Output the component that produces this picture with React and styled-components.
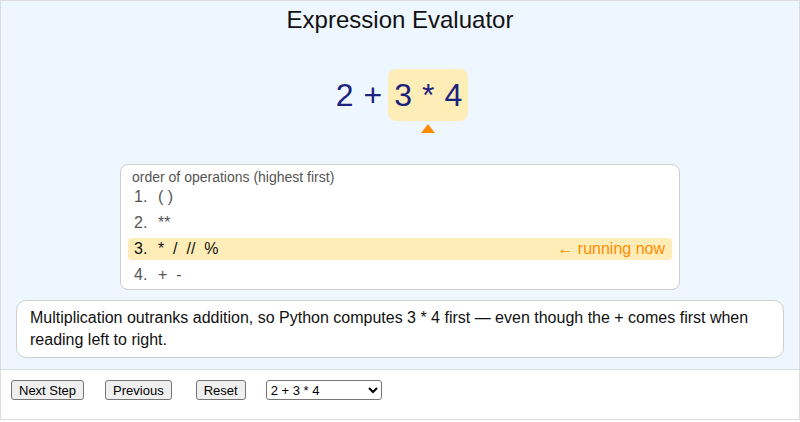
import React, { useState } from 'react'
import styled, { createGlobalStyle } from 'styled-components'

const GlobalStyle = createGlobalStyle`
  html, body {
    margin: 0;
    padding: 0;
    background: #ffffff;
  }
  body {
    font-family: "Liberation Sans", Arial, Helvetica, sans-serif;
  }
`

const Frame = styled.div`
  width: 800px;
  height: 420px;
  box-sizing: border-box;
  border: 1px solid #dcdcdc;
  display: flex;
  flex-direction: column;
`

const Stage = styled.div`
  background: #eef6ff;
  border-bottom: 1px solid #dcdcdc;
  padding: 5px 15px 11px;
  display: flex;
  flex-direction: column;
  align-items: center;
`

const Title = styled.h2`
  margin: 0;
  font-size: 24px;
  font-weight: normal;
  line-height: 28px;
  color: #111;
`

const Expression = styled.div`
  margin-top: 35px;
  display: flex;
  align-items: flex-start;
  gap: 2px;
  font-size: 32px;
  line-height: 38px;
  color: #1a237e;
`

const Token = styled.span`
  padding: 7px 4px;
`

const Focus = styled.div`
  display: flex;
  flex-direction: column;
  align-items: center;
`

const FocusBox = styled.div`
  display: flex;
  gap: 2px;
  background: #ffedb8;
  border-radius: 8px;
  padding: 0 2px;
`

const Pointer = styled.div`
  margin-top: 3px;
  width: 0;
  height: 0;
  border-left: 7px solid transparent;
  border-right: 7px solid transparent;
  border-bottom: 9px solid #ff8c00;
`

const Panel = styled.div`
  margin-top: 31px;
  width: 560px;
  box-sizing: border-box;
  background: #ffffff;
  border: 1px solid #cfcfcf;
  border-radius: 8px;
  padding: 4px 7px 3px;
`

const PanelHead = styled.div`
  font-size: 14px;
  line-height: 16px;
  color: #555;
  padding-left: 4px;
  margin-bottom: 1px;
`

const Row = styled.div`
  display: flex;
  align-items: center;
  height: 22px;
  margin-top: ${p => (p.$first ? '0' : '4px')};
  padding: 0 7px 0 6px;
  border-radius: 4px;
  font-size: 16px;
  color: ${p => (p.$active ? '#111' : '#555')};
  background: ${p => (p.$active ? '#ffedb8' : 'transparent')};
`

const Num = styled.span`
  width: 24px;
`

const Ops = styled.span`
  flex: 1;
  white-space: pre;
`

const Running = styled.span`
  color: #ff8c00;
`

const Note = styled.div`
  margin-top: 10px;
  align-self: stretch;
  background: #ffffff;
  border: 1px solid #cfcfcf;
  border-radius: 10px;
  padding: 6px 13px;
  font-size: 16px;
  line-height: 22px;
  color: #111;
`

const Controls = styled.div`
  flex: 1;
  display: flex;
  align-items: flex-start;
  padding: 10px 10px;
`

const Button = styled.button`
  font-family: "Liberation Sans", Arial, sans-serif;
  font-size: 13px;
  height: 20px;
  padding: 1px 7px;
  margin-right: ${p => p.$gap || 20}px;
  background: #efefef;
  border: 1px solid #767676;
  border-radius: 3px;
  color: #000;
`

const Picker = styled.select`
  font-family: "Liberation Sans", Arial, sans-serif;
  font-size: 13px;
  height: 20px;
  width: 116px;
  border: 1px solid #767676;
  border-radius: 3px;
  background: #fff;
  color: #000;
`

const levels = [
  { n: '1.', ops: '( )' },
  { n: '2.', ops: '**' },
  { n: '3.', ops: '*  /  //  %', active: true },
  { n: '4.', ops: '+  -' },
]

export default function App() {
  const [expr, setExpr] = useState('2 + 3 * 4')

  return (
    <>
      <GlobalStyle />
      <Frame>
        <Stage>
          <Title>Expression Evaluator</Title>
          <Expression>
            <Token>2</Token>
            <Token>+</Token>
            <Focus>
              <FocusBox>
                <Token>3</Token>
                <Token>*</Token>
                <Token>4</Token>
              </FocusBox>
              <Pointer />
            </Focus>
          </Expression>
          <Panel>
            <PanelHead>order of operations (highest first)</PanelHead>
            {levels.map((l, i) => (
              <Row key={l.n} $active={l.active} $first={i === 0}>
                <Num>{l.n}</Num>
                <Ops>{l.ops}</Ops>
                {l.active && <Running>← running now</Running>}
              </Row>
            ))}
          </Panel>
          <Note>
            Multiplication outranks addition, so Python computes 3 * 4 first — even though the + comes first when reading left to right.
          </Note>
        </Stage>
        <Controls>
          <Button $gap={21}>Next Step</Button>
          <Button $gap={24}>Previous</Button>
          <Button $gap={20}>Reset</Button>
          <Picker value={expr} onChange={e => setExpr(e.target.value)}>
            <option>2 + 3 * 4</option>
            <option>(2 + 3) * 4</option>
            <option>2 ** 3 * 4</option>
            <option>10 - 4 // 2</option>
          </Picker>
        </Controls>
      </Frame>
    </>
  )
}
